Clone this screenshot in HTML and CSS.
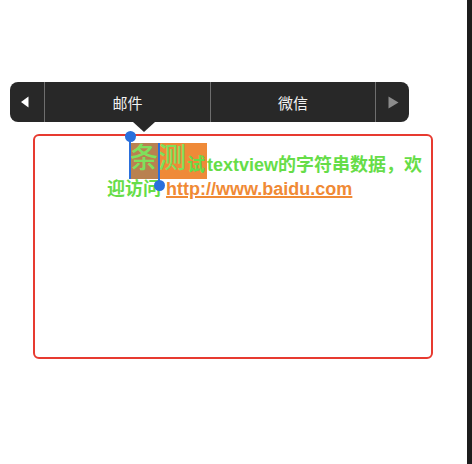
FILE: index.html
```html
<!DOCTYPE html>
<html lang="zh">
<head>
<meta charset="utf-8">
<title>TextView</title>
<link rel="stylesheet" href="styles.css">
</head>
<body>
<div class="screen">
  <div class="canvas">
    <div class="menu">
      <div class="nav-btn">
        <svg width="8" height="12" viewBox="0 0 8 12"><polygon points="0,6 7.5,0.5 7.5,11.5" fill="#ffffff"/></svg>
      </div>
      <div class="item">邮件</div>
      <div class="item item-2">微信</div>
      <div class="nav-btn nav-right">
        <svg width="11" height="13" viewBox="0 0 11 13"><polygon points="0.5,0.5 10.5,6.5 0.5,12.5" fill="#8c8c8c"/></svg>
      </div>
      <span class="pointer"></span>
    </div>
    <div class="textview">
      <p class="content"><span class="sel"><span class="mask"></span><span class="big">条</span><span class="big">测</span><span class="small">试</span><span class="caret caret-start"></span><span class="caret caret-end"></span></span>textview的字符串数据，欢<br>迎访问 <a class="link" href="#">http://www.baidu.com</a></p>
    </div>
  </div>
  <div class="edge"></div>
</div>
</body>
</html>
```
FILE: styles.css
```css
html, body {
  margin: 0;
  padding: 0;
  background: #ffffff;
}

.screen {
  display: flex;
  width: 472px;
  height: 464px;
  overflow: hidden;
}

.canvas {
  position: relative;
  flex: 1;
  box-sizing: border-box;
  padding: 134px 0 0 33px;
  background: #ffffff;
}

.edge {
  width: 5px;
  background: #1c1c1c;
}

/* popup edit menu */
.menu {
  position: absolute;
  left: 10px;
  top: 82px;
  width: 399px;
  height: 40px;
  display: flex;
  background: #282828;
  border-radius: 8px;
  z-index: 2;
}

.nav-btn {
  width: 34px;
  display: flex;
  align-items: center;
  justify-content: center;
}

.nav-btn svg {
  display: block;
  margin-left: -5px;
}

.nav-right {
  border-left: 1px solid #6e6e6e;
  width: 33px;
}

.nav-right svg {
  margin-left: 0;
  margin-right: -2px;
}

.item {
  width: 165px;
  border-left: 1px solid #6e6e6e;
  display: flex;
  align-items: center;
  justify-content: center;
  color: #f2f2f2;
  font: 400 15px "Noto Sans CJK SC", "Noto Sans", sans-serif;
}

.item-2 {
  width: 164px;
}

.pointer {
  position: absolute;
  left: 123px;
  top: 40px;
  width: 0;
  height: 0;
  border-left: 11px solid transparent;
  border-right: 11px solid transparent;
  border-top: 10px solid #282828;
}

/* text view */
.textview {
  width: 400px;
  height: 225px;
  box-sizing: border-box;
  border: 2px solid #e73a30;
  border-radius: 6px;
  padding: 7px 0 0 72px;
}

.content {
  margin: 0;
  font: 700 18px "Liberation Sans", "Noto Sans CJK SC", sans-serif;
  line-height: 20px;
  color: #66dd48;
  text-indent: 23px;
  white-space: nowrap;
}

.sel {
  position: relative;
  z-index: 0;
  display: inline-block;
  text-indent: 0;
  height: 36px;
  line-height: 44px;
  background: #ef8a38;
  padding-right: 2px;
}

.mask {
  position: absolute;
  left: 0;
  top: 0;
  width: 28px;
  height: 36px;
  background: #b98150;
  z-index: -1;
}

.big {
  font-size: 28px;
  line-height: 28px;
  vertical-align: 3px;
  font-weight: 500;
  color: #7ee05c;
}

.small {
  margin-left: 1px;
}

.caret {
  position: absolute;
  width: 2px;
  background: #2a6fdc;
}

.caret::after {
  content: "";
  position: absolute;
  width: 11px;
  height: 11px;
  border-radius: 50%;
  background: #2a6fdc;
  left: -4.5px;
}

.caret-start {
  left: -1px;
  top: -7px;
  height: 43px;
}

.caret-start::after {
  top: -5px;
}

.caret-end {
  left: 28px;
  top: 0;
  height: 43px;
}

.caret-end::after {
  bottom: -5px;
}

.link {
  color: #f08a35;
  text-decoration: underline;
  text-decoration-thickness: 2px;
  text-underline-offset: 1px;
}
```
